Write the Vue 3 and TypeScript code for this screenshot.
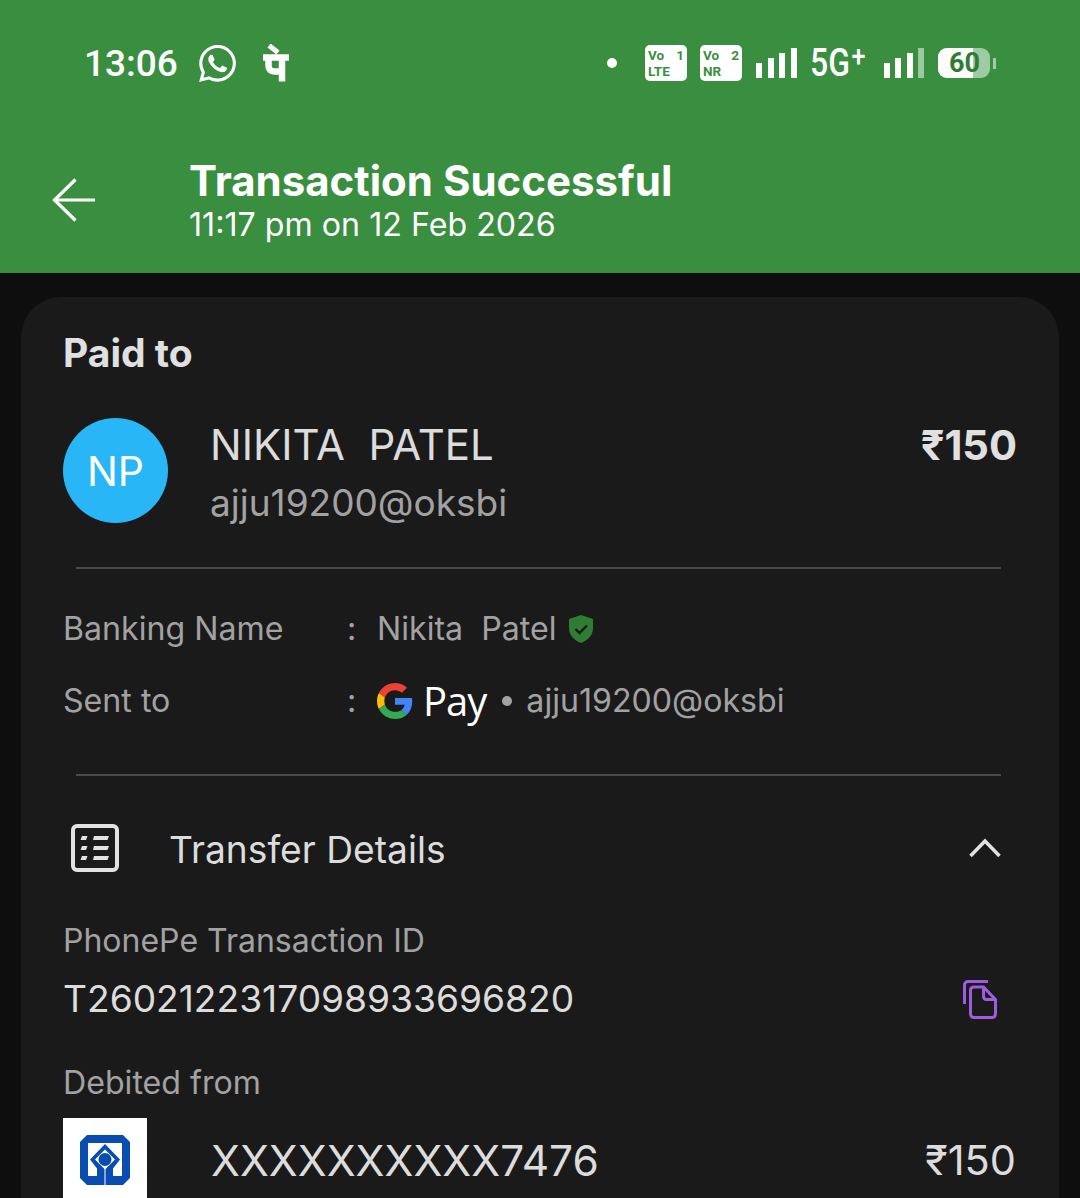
<script setup lang="ts">
const simBadges = [
  { top: 'Vo', slot: '1', bottom: 'LTE' },
  { top: 'Vo', slot: '2', bottom: 'NR' },
]
const signalBars = [15, 20, 25, 30]
const listRows = [12, 22, 32]
</script>

<template>
  <div class="page">
    <header class="header">
      <div class="status">
        <span class="time">13:06</span>
        <svg class="wa" viewBox="0 0 24 24" fill="#fff"><path d="M17.472 14.382c-.297-.149-1.758-.867-2.03-.967-.273-.099-.471-.148-.67.15-.197.297-.767.966-.94 1.164-.173.199-.347.223-.644.075-.297-.15-1.255-.463-2.39-1.475-.883-.788-1.48-1.761-1.653-2.059-.173-.297-.018-.458.13-.606.134-.133.298-.347.446-.52.149-.174.198-.298.298-.497.099-.198.05-.371-.025-.52-.075-.149-.669-1.612-.916-2.207-.242-.579-.487-.5-.669-.51-.173-.008-.371-.01-.57-.01-.198 0-.52.074-.792.372-.272.297-1.04 1.016-1.04 2.479 0 1.462 1.065 2.875 1.213 3.074.149.198 2.096 3.2 5.077 4.487.709.306 1.262.489 1.694.625.712.227 1.36.195 1.871.118.571-.085 1.758-.719 2.006-1.413.248-.694.248-1.289.173-1.413-.074-.124-.272-.198-.57-.347m-5.421 7.403h-.004a9.87 9.87 0 01-5.031-1.378l-.361-.214-3.741.982.998-3.648-.235-.374a9.86 9.86 0 01-1.51-5.26c.001-5.45 4.436-9.884 9.888-9.884 2.64 0 5.122 1.03 6.988 2.898a9.825 9.825 0 012.893 6.994c-.003 5.45-4.437 9.884-9.885 9.884m8.413-18.297A11.815 11.815 0 0012.05 0C5.495 0 .16 5.335.157 11.892c0 2.096.547 4.142 1.588 5.945L.057 24l6.305-1.654a11.882 11.882 0 005.683 1.448h.005c6.554 0 11.89-5.335 11.893-11.893a11.821 11.821 0 00-3.48-8.413z"/></svg>
        <svg class="pe" viewBox="0 0 26 38" fill="none" stroke="#fff" stroke-width="6.500">
          <path d="M0 13.500H26" />
          <path d="M19 13V37.500" />
          <path d="M5.500 14V21.500C5.500 25.500 8 27.500 11 27.500H19" />
          <path d="M6 1.500L15 8.500" stroke-width="5" />
        </svg>
        <span class="status-spacer"></span>
        <span class="dot"></span>
        <span v-for="b in simBadges" :key="b.slot" class="sim">
          <span class="sim-line"><span>{{ b.top }}</span><span>{{ b.slot }}</span></span>
          <span class="sim-line">{{ b.bottom }}</span>
        </span>
        <span class="bars first">
          <i v-for="h in signalBars" :key="h" :style="{ height: h + 'px' }"></i>
        </span>
        <span class="net">5G<sup>+</sup></span>
        <span class="bars second">
          <i v-for="h in signalBars" :key="h" :style="{ height: h + 'px' }"></i>
        </span>
        <span class="battery">
          <span class="batt-body"><span class="batt-fill"></span><span class="batt-text">60</span></span>
          <span class="batt-tip"></span>
        </span>
      </div>
      <div class="nav">
        <svg class="back" viewBox="0 0 44 44" fill="none" stroke="#fff" stroke-width="3.200">
          <path d="M43 22H3" />
          <path d="M23.500 1.500L2.500 22L23.500 42.500" />
        </svg>
        <div>
          <div class="title">Transaction Successful</div>
          <div class="subtitle">11:17 pm on 12 Feb 2026</div>
        </div>
      </div>
    </header>

    <main class="card">
      <div class="paid">Paid to</div>
      <div class="person">
        <div class="avatar">NP</div>
        <div class="person-text">
          <div class="name">NIKITA&nbsp; PATEL</div>
          <div class="handle">ajju19200@oksbi</div>
        </div>
        <div class="amount">₹150</div>
      </div>

      <div class="divider d1"></div>

      <div class="info first-info">
        <span class="muted">Banking Name</span>
        <span class="muted">:</span>
        <span class="value">
          <span class="muted">Nikita&nbsp; Patel</span>
          <svg class="shield" viewBox="0 0 24 28">
            <path fill="#2e7d32" d="M12 0L24 4V13C24 20 19 25.500 12 28C5 25.500 0 20 0 13V4Z" />
            <path fill="none" stroke="#1a1a1a" stroke-width="2.400" d="M6.500 14L10.500 18L18 10.500" />
          </svg>
        </span>
      </div>
      <div class="info second-info">
        <span class="muted">Sent to</span>
        <span class="muted">:</span>
        <span class="value">
          <svg class="glogo" viewBox="0 0 48 48">
            <path fill="#EA4335" d="M24 9.500c3.540 0 6.710 1.220 9.210 3.600l6.850-6.850C35.900 2.380 30.470 0 24 0 14.620 0 6.510 5.380 2.560 13.220l7.980 6.190C12.430 13.720 17.740 9.500 24 9.500z" />
            <path fill="#4285F4" d="M46.980 24.550c0-1.570-.15-3.090-.38-4.550H24v9.020h12.940c-.58 2.960-2.260 5.480-4.780 7.180l7.730 6c4.510-4.180 7.090-10.360 7.090-17.650z" />
            <path fill="#FBBC05" d="M10.530 28.590c-.48-1.450-.76-2.990-.76-4.590s.27-3.140.76-4.590l-7.980-6.190C.92 16.460 0 20.120 0 24c0 3.880.92 7.540 2.560 10.780l7.970-6.190z" />
            <path fill="#34A853" d="M24 48c6.480 0 11.930-2.130 15.890-5.810l-7.730-6c-2.150 1.450-4.920 2.300-8.160 2.300-6.260 0-11.570-4.220-13.470-9.910l-7.980 6.190C6.510 42.620 14.620 48 24 48z" />
          </svg>
          <span class="pay">Pay</span>
          <span class="bullet"></span>
          <span class="muted">ajju19200@oksbi</span>
        </span>
      </div>

      <div class="divider d2"></div>

      <div class="transfer">
        <svg class="list-icon" viewBox="0 0 48 48" fill="none">
          <rect x="2" y="2" width="44" height="44" rx="4" stroke="#e2e2e2" stroke-width="4" />
          <g v-for="y in listRows" :key="y" fill="#e2e2e2">
            <path :d="`M11 ${y}H16.500L15 ${y + 4}H9.500Z`" />
            <path :d="`M23 ${y}H38L36.500 ${y + 4}H22Z`" />
          </g>
        </svg>
        <span class="transfer-title">Transfer Details</span>
        <svg class="chevron" viewBox="0 0 32 20" fill="none" stroke="#e2e2e2" stroke-width="3.500"><path d="M1.500 18L16 3L30.500 18" /></svg>
      </div>

      <div class="muted label-id">PhonePe Transaction ID</div>
      <div class="txn">
        <span class="txn-id">T2602122317098933696820</span>
        <svg class="copy" viewBox="0 0 34 39" fill="none" stroke="#a05ce0" stroke-width="3">
          <path d="M1.500 24V5C1.500 3 3 1.500 5 1.500H25" />
          <path d="M15 7H11C8.500 7 7.500 8.500 7.500 10.500V33.500C7.500 36 9 37.500 11 37.500H29C31.500 37.500 32.500 36 32.500 33.500V19.500L20.500 7H15" />
          <path d="M20.500 7V16C20.500 18 21.500 19.500 23.500 19.500H32.500" />
        </svg>
      </div>

      <div class="muted label-debit">Debited from</div>
      <div class="account">
        <div class="bank">
          <svg class="bank-logo" viewBox="0 0 50 50">
            <path fill="#0a4db0" d="M7 0H43L50 7V43L43 50H7L0 43V7Z" />
            <path fill="#fff" d="M8 8H42V41H33V33.500L40 24.500L25 9L10 24.500L17 33.500V41H8Z" />
            <path fill="#fff" d="M24.500 32H25.500V50H24.500Z" />
            <path fill="#fff" d="M25 14.500L35 24.500L25 34.500L15 24.500Z" />
            <circle cx="25" cy="24.500" r="6.500" fill="#0a4db0" />
          </svg>
        </div>
        <span class="masked">XXXXXXXXXX7476</span>
        <span class="debit">₹150</span>
      </div>
    </main>
  </div>
</template>

<style scoped>
.page {
  height: 1198px;
  overflow: hidden;
  background: #0e0e0e;
  font-family: Inter, "Noto Sans", sans-serif;
  color: #e0e0e0;
}
.header {
  height: 273px;
  background: #3a8e3f;
  color: #fff;
}
.status {
  height: 126px;
  padding: 0 84px 0 84px;
  box-sizing: border-box;
  display: flex;
  align-items: center;
  font-family: Roboto, sans-serif;
}
.time {
  width: 92px;
  font-size: 37px;
  font-weight: 500;
  white-space: nowrap;
}
.wa {
  width: 37px;
  height: 37px;
  margin-left: 23px;
}
.pe {
  width: 26px;
  height: 38px;
  margin-left: 27px;
}
.status-spacer {
  flex: 1;
}
.dot {
  width: 10px;
  height: 10px;
  border-radius: 50%;
  background: #fff;
  margin-right: 28px;
}
.sim {
  width: 42px;
  height: 36px;
  margin-right: 13px;
  padding: 2px 3px 0 3px;
  box-sizing: border-box;
  background: #fff;
  border-radius: 5px;
  color: #3a8e3f;
  font-size: 13.5px;
  line-height: 16px;
  font-weight: 700;
  display: flex;
  flex-direction: column;
}
.sim-line {
  display: flex;
  justify-content: space-between;
}
.bars {
  display: flex;
  align-items: flex-end;
  gap: 5.500px;
  height: 30px;
}
.bars i {
  width: 6px;
  background: #fff;
}
.bars.first {
  margin: 0 0 0 1px;
}
.bars.second i:last-child {
  background: #9cc89f;
}
.net {
  width: 56px;
  margin: 0 18px 0 13px;
  font-size: 38px;
  font-weight: 500;
  line-height: 36px;
  white-space: nowrap;
  transform: scaleX(0.84);
  transform-origin: left;
}
.net sup {
  font-size: 30px;
  line-height: 0;
  vertical-align: 10px;
  margin-left: 2px;
}
.battery {
  margin-left: 14px;
  display: flex;
  align-items: center;
  gap: 3px;
}
.batt-body {
  position: relative;
  width: 52px;
  height: 30px;
  border-radius: 9px;
  background: #a0caa3;
}
.batt-fill {
  position: absolute;
  left: 0;
  top: 0;
  bottom: 0;
  width: 35px;
  background: #fff;
  border-radius: 9px 0 0 9px;
}
.batt-text {
  position: absolute;
  left: 11px;
  top: 0;
  color: #2e7d32;
  font-size: 27px;
  font-weight: 700;
  line-height: 30px;
  white-space: nowrap;
}
.batt-tip {
  width: 3px;
  height: 11px;
  background: #a0caa3;
}
.nav {
  display: flex;
  align-items: center;
  margin-top: 33px;
  padding-left: 52px;
}
.back {
  width: 44px;
  height: 44px;
  margin: 0 93px 6px 0;
}
.title {
  font-size: 42px;
  line-height: 44px;
  font-weight: 700;
  white-space: nowrap;
}
.subtitle {
  font-size: 32.2px;
  line-height: 44px;
  white-space: nowrap;
}
.card {
  height: 1000px;
  margin: 24px 21px 0;
  padding: 34px 42px 0 42px;
  box-sizing: border-box;
  background: #1a1a1a;
  border-radius: 40px 40px 0 0;
}
.paid {
  font-size: 39px;
  line-height: 44px;
  font-weight: 700;
}
.person {
  display: flex;
  margin-top: 43px;
  height: 105px;
}
.avatar {
  width: 105px;
  height: 105px;
  border-radius: 50%;
  background: #29b6f6;
  color: #fff;
  font-size: 41px;
  display: flex;
  align-items: center;
  justify-content: center;
  flex: none;
}
.person-text {
  margin-left: 42px;
  flex: 1;
}
.name {
  margin-top: 2px;
  font-size: 42px;
  line-height: 50px;
  color: #dcdcdc;
  white-space: nowrap;
}
.handle {
  margin-top: 8px;
  font-size: 37px;
  line-height: 50px;
  color: #a2a2a2;
  white-space: nowrap;
}
.amount {
  margin-top: 2px;
  font-size: 41.6px;
  line-height: 50px;
  font-weight: 700;
  margin-right: 0;
}
.divider {
  height: 2px;
  margin: 0 16px 0 13px;
  background: #4a4a4a;
}
.d1 {
  margin-top: 44px;
}
.d2 {
  margin-top: 51px;
}
.info {
  display: grid;
  grid-template-columns: 284px 30px 1fr;
  font-size: 32.15px;
  line-height: 44px;
  white-space: nowrap;
}
.first-info {
  margin-top: 38px;
}
.second-info {
  margin-top: 28px;
}
.muted {
  color: #a2a2a2;
}
.value {
  display: flex;
  align-items: center;
}
.shield {
  width: 24px;
  height: 28px;
  margin-left: 12px;
}
.glogo {
  width: 36px;
  height: 36px;
  flex: none;
}
.pay {
  margin-left: 10px;
  font-family: "Open Sans", sans-serif;
  font-size: 40px;
  letter-spacing: -1px;
  color: #fff;
  line-height: 44px;
}
.bullet {
  width: 10px;
  height: 10px;
  margin: 0 14px 0 16px;
  border-radius: 50%;
  background: #a2a2a2;
}
.transfer {
  display: flex;
  align-items: center;
  height: 48px;
  margin-top: 48px;
  padding-right: 16px;
}
.list-icon {
  width: 48px;
  height: 48px;
  margin-left: 8px;
  flex: none;
}
.transfer-title {
  flex: 1;
  margin: 3px 0 0 50px;
  font-size: 37.2px;
  color: #dcdcdc;
}
.chevron {
  width: 32px;
  height: 20px;
}
.label-id {
  margin: 47px 0 0;
  font-size: 32px;
  line-height: 44px;
}
.txn {
  display: flex;
  align-items: center;
  justify-content: space-between;
  margin: 14px 20px 0 0;
  height: 44px;
}
.txn-id {
  font-size: 37.15px;
  line-height: 44px;
  color: #dcdcdc;
}
.copy {
  width: 34px;
  height: 39px;
}
.label-debit {
  margin: 40px 0 0;
  font-size: 32.15px;
  line-height: 44px;
}
.account {
  display: flex;
  align-items: center;
  margin-top: 13px;
  color: #dcdcdc;
}
.bank {
  width: 84px;
  height: 84px;
  flex: none;
  background: #fff;
  display: flex;
  align-items: center;
  justify-content: center;
}
.bank-logo {
  width: 50px;
  height: 50px;
}
.masked {
  flex: 1;
  margin-left: 64px;
  font-size: 42.4px;
}
.debit {
  font-size: 41.5px;
  margin-right: 1px;
}
</style>

<style>
html, body {
  margin: 0;
  background: #0e0e0e;
}
</style>
